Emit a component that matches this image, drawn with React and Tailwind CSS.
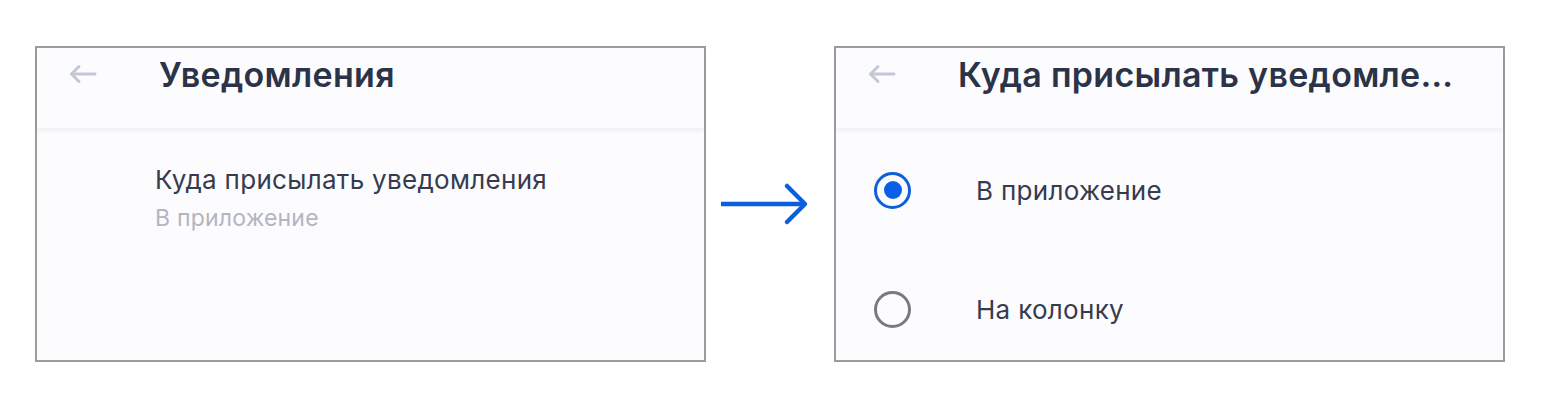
function BackArrow() {
  return (
    <svg width="28" height="20" viewBox="0 0 28 20" fill="none" className="ml-[32px] mt-[16px] shrink-0">
      <path d="M26 10H3" stroke="#c4c7d7" strokeWidth="3" strokeLinecap="round" />
      <path d="M10 2.5L2.5 10L10 17.5" stroke="#c4c7d7" strokeWidth="3" strokeLinecap="round" strokeLinejoin="round" />
    </svg>
  )
}

function Header({ title }) {
  return (
    <div className="relative z-10 flex h-[80px] items-start shadow-[0_3px_4px_rgba(0,0,0,0.05)]">
      <BackArrow />
      <h1 className="ml-[62px] mt-[7px] w-[500px] truncate text-[34px] font-semibold leading-[40px] tracking-[0.3px] text-[#2b3349]">
        {title}
      </h1>
    </div>
  )
}

function Radio({ checked }) {
  if (checked) {
    return (
      <span className="flex h-[37px] w-[37px] items-center justify-center rounded-full border-[3px] border-[#0f5fdc]">
        <span className="h-[18px] w-[18px] rounded-full bg-[#0b5fe6]" />
      </span>
    )
  }
  return <span className="h-[37px] w-[37px] rounded-full border-[3px] border-[#7a7a7e]" />
}

export default function App() {
  return (
    <div
      className="flex h-[402px] w-[1548px] items-start bg-white pl-[35px] pt-[46px]"
      style={{ fontFamily: 'Inter, "Noto Sans", sans-serif' }}
    >
      <section className="h-[316px] w-[671px] border-2 border-[#9c9c9c] bg-[#fcfbfe]">
        <Header title="Уведомления" />
        <div className="pl-[118px] pt-[36px]">
          <p className="text-[26px] leading-[32px] tracking-[0.3px] text-[#363b4e]">Куда присылать уведомления</p>
          <p className="mt-[8px] text-[23px] leading-[28px] tracking-[0.2px] text-[#b3b5c1]">В приложение</p>
        </div>
      </section>

      <div className="flex h-[316px] w-[128px] items-center justify-center">
        <svg width="92" height="44" viewBox="0 0 92 44" className="mr-[10px]" fill="none">
          <path d="M2 22H86" stroke="#0b5ee0" strokeWidth="4.5" />
          <path d="M68 4L86 22L68 40" stroke="#0b5ee0" strokeWidth="4.5" strokeLinecap="round" strokeLinejoin="round" />
        </svg>
      </div>

      <section className="h-[316px] w-[671px] border-2 border-[#9c9c9c] bg-[#fcfbfe]">
        <Header title="Куда присылать уведомления" />
        <div className="flex flex-col">
          <label className="flex h-[124px] items-center pl-[38px]">
            <Radio checked />
            <span className="ml-[65px] text-[26px] tracking-[0.3px] text-[#363b4e]">В приложение</span>
          </label>
          <label className="flex h-[112px] items-center pl-[38px] pt-[2px]">
            <Radio />
            <span className="ml-[65px] text-[26px] tracking-[0.3px] text-[#363b4e]">На колонку</span>
          </label>
        </div>
      </section>
    </div>
  )
}
